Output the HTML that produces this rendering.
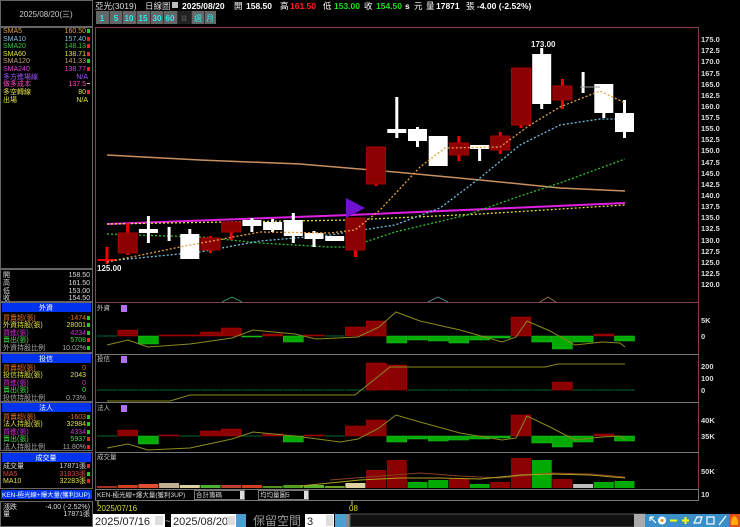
<!DOCTYPE html>
<html><head><meta charset="utf-8">
<style>
html,body{margin:0;padding:0;background:#000;width:740px;height:527px;overflow:hidden}
body{font-family:"Liberation Sans","Noto Sans CJK TC",sans-serif}
svg{position:absolute;left:0;top:0}
</style></head><body>
<svg width="740" height="527" viewBox="0 0 740 527" xmlns="http://www.w3.org/2000/svg" font-family="Liberation Sans, Noto Sans CJK TC, sans-serif">
<rect width="740" height="527" fill="#000"/>
<g fill="none" stroke="#666" stroke-width="1">
<rect x="0.5" y="0.5" width="92" height="26"/>
<rect x="0.5" y="27.5" width="92" height="241"/>
<rect x="0.5" y="269.5" width="92" height="32"/>
<rect x="0.5" y="302.5" width="92" height="50"/>
<rect x="0.5" y="353.5" width="92" height="48"/>
<rect x="0.5" y="402.5" width="92" height="48"/>
<rect x="0.5" y="452.5" width="92" height="36"/>
<rect x="0.5" y="501.5" width="92" height="25"/>
</g>
<text x="46" y="17" font-size="8" fill="#ccc" text-anchor="middle">2025/08/20(三)</text>
<g font-size="7">
<text x="3" y="33" fill="#e0a040">SMA5</text><text x="86" y="33" fill="#e0a040" text-anchor="end">160.50</text><rect x="87" y="29" width="3" height="4" fill="#2c2"/>
<text x="3" y="41" fill="#80c0e0">SMA10</text><text x="86" y="41" fill="#80c0e0" text-anchor="end">157.40</text><rect x="87" y="37" width="3" height="4" fill="#e22"/>
<text x="3" y="48" fill="#40c040">SMA20</text><text x="86" y="48" fill="#40c040" text-anchor="end">148.13</text><rect x="87" y="44" width="3" height="4" fill="#e22"/>
<text x="3" y="56" fill="#e0e040">SMA60</text><text x="86" y="56" fill="#e0e040" text-anchor="end">138.71</text><rect x="87" y="52" width="3" height="4" fill="#e22"/>
<text x="3" y="63" fill="#c0a070">SMA120</text><text x="86" y="63" fill="#c0a070" text-anchor="end">141.33</text><rect x="87" y="59" width="3" height="4" fill="#2c2"/>
<text x="3" y="71" fill="#e040e0">SMA240</text><text x="86" y="71" fill="#e040e0" text-anchor="end">138.77</text><rect x="87" y="67" width="3" height="4" fill="#e22"/>
<text x="3" y="79" fill="#a050ff">多方進場線</text><text x="88" y="79" fill="#a050ff" text-anchor="end">N/A</text>
<text x="3" y="86" fill="#ff40c0">做多成本</text><text x="86" y="86" fill="#ff40c0" text-anchor="end">137.5</text><rect x="87" y="83" width="3" height="1" fill="#ccc"/>
<text x="3" y="94" fill="#e0e040">多空轉線</text><text x="86" y="94" fill="#e0e040" text-anchor="end">80</text><rect x="87" y="90" width="3" height="4" fill="#e22"/>
<text x="3" y="102" fill="#e0e040">出場</text><text x="88" y="102" fill="#e0e040" text-anchor="end">N/A</text>
</g>
<g font-size="7" fill="#ddd">
<text x="3" y="277">開</text><text x="90" y="277" text-anchor="end">158.50</text>
<text x="3" y="285">高</text><text x="90" y="285" text-anchor="end">161.50</text>
<text x="3" y="293">低</text><text x="90" y="293" text-anchor="end">153.00</text>
<text x="3" y="300">收</text><text x="90" y="300" text-anchor="end">154.50</text>
</g>
<g fill="#0033ee"><rect x="2" y="303" width="89" height="9"/><rect x="2" y="354" width="89" height="9"/><rect x="2" y="403" width="89" height="9"/><rect x="2" y="453" width="89" height="9"/><rect x="1" y="490" width="91" height="9"/></g>
<g font-size="7" text-anchor="middle" fill="#fff"><text x="46" y="310">外資</text><text x="46" y="361">投信</text><text x="46" y="410">法人</text><text x="46" y="460">成交量</text></g>
<g font-size="7">
<text x="3" y="320" fill="#e07020">買賣超(張)</text><text x="86" y="320" fill="#e07020" text-anchor="end">-1474</text><rect x="87" y="316" width="3" height="4" fill="#2c2"/>
<text x="3" y="327" fill="#e0e040">外資持股(張)</text><text x="86" y="327" fill="#e0e040" text-anchor="end">28001</text><rect x="87" y="323" width="3" height="4" fill="#2c2"/>
<text x="3" y="335" fill="#d030d0">買進(張)</text><text x="86" y="335" fill="#d030d0" text-anchor="end">4234</text><rect x="87" y="331" width="3" height="4" fill="#2c2"/>
<text x="3" y="342" fill="#40e040">賣出(張)</text><text x="86" y="342" fill="#40e040" text-anchor="end">5708</text><rect x="87" y="338" width="3" height="4" fill="#e22"/>
<text x="3" y="350" fill="#aaa">外資持股比例</text><text x="86" y="350" fill="#aaa" text-anchor="end">10.02%</text><rect x="87" y="346" width="3" height="4" fill="#2c2"/>
<text x="3" y="370" fill="#e07020">買賣超(張)</text><text x="86" y="370" fill="#e07020" text-anchor="end">0</text>
<text x="3" y="377" fill="#e0e040">投信持股(張)</text><text x="86" y="377" fill="#e0e040" text-anchor="end">2043</text>
<text x="3" y="385" fill="#d030d0">買進(張)</text><text x="86" y="385" fill="#d030d0" text-anchor="end">0</text>
<text x="3" y="392" fill="#40e040">賣出(張)</text><text x="86" y="392" fill="#40e040" text-anchor="end">0</text>
<text x="3" y="400" fill="#aaa">投信持股比例</text><text x="86" y="400" fill="#aaa" text-anchor="end">0.73%</text>
<text x="3" y="419" fill="#e07020">買賣超(張)</text><text x="86" y="419" fill="#e07020" text-anchor="end">-1603</text><rect x="87" y="415" width="3" height="4" fill="#2c2"/>
<text x="3" y="426" fill="#e0e040">法人持股(張)</text><text x="86" y="426" fill="#e0e040" text-anchor="end">32984</text><rect x="87" y="422" width="3" height="4" fill="#2c2"/>
<text x="3" y="434" fill="#d030d0">買進(張)</text><text x="86" y="434" fill="#d030d0" text-anchor="end">4334</text><rect x="87" y="430" width="3" height="4" fill="#2c2"/>
<text x="3" y="441" fill="#40e040">賣出(張)</text><text x="86" y="441" fill="#40e040" text-anchor="end">5937</text><rect x="87" y="437" width="3" height="4" fill="#e22"/>
<text x="3" y="449" fill="#aaa">法人持股比例</text><text x="86" y="449" fill="#aaa" text-anchor="end">11.80%</text><rect x="87" y="445" width="3" height="4" fill="#e22"/>
<text x="3" y="468" fill="#ddd">成交量</text><text x="86" y="468" fill="#ddd" text-anchor="end">17871張</text><rect x="87" y="464" width="3" height="4" fill="#e22"/>
<text x="3" y="476" fill="#e04040">MA5</text><text x="86" y="476" fill="#e04040" text-anchor="end">31833張</text><rect x="87" y="472" width="3" height="4" fill="#2c2"/>
<text x="3" y="483" fill="#e0e040">MA10</text><text x="86" y="483" fill="#e0e040" text-anchor="end">32283張</text><rect x="87" y="479" width="3" height="4" fill="#e22"/>
<text x="2" y="497" fill="#fff" font-size="6" textLength="88" lengthAdjust="spacingAndGlyphs">KEN-極光線+爆大量(獲利3UP)</text>
<text x="3" y="509" fill="#ddd">漲跌</text><text x="90" y="509" fill="#ddd" text-anchor="end">-4.00 (-2.52%)</text>
<text x="3" y="516" fill="#ddd">量</text><text x="90" y="516" fill="#ddd" text-anchor="end">17871張</text>
</g>
<g font-size="8.5" font-weight="bold" fill="#fff">
<text x="95" y="9" font-weight="normal" fill="#ddd">亞光(3019)</text>
<text x="145" y="9" font-weight="normal" fill="#ddd">日線圖</text>
<rect x="172" y="2" width="6" height="6" fill="#bbb"/>
<text x="182" y="9">2025/08/20</text>
<text x="234" y="9" font-weight="normal">開</text><text x="246" y="9">158.50</text>
<text x="280" y="9" font-weight="normal">高</text><text x="290" y="9" fill="#f22">161.50</text>
<text x="323" y="9" font-weight="normal">低</text><text x="334" y="9" fill="#2d2">153.00</text>
<text x="364" y="9" font-weight="normal">收</text><text x="376" y="9" fill="#2d2">154.50</text>
<text x="405" y="9">s</text><text x="414" y="9" font-weight="normal">元</text>
<text x="426" y="9" font-weight="normal">量</text><text x="436" y="9">17871</text><text x="466" y="9" font-weight="normal">張</text>
<text x="477" y="9">-4.00 (-2.52%)</text>
</g>
<g font-size="8" font-weight="bold" fill="#2ee" text-anchor="middle">
<rect x="96" y="11" width="120" height="13" fill="#666"/>
<rect x="178" y="11" width="13" height="13" fill="#222"/>
<g stroke="#333"><line x1="109.5" y1="11" x2="109.5" y2="24"/><line x1="122.5" y1="11" x2="122.5" y2="24"/><line x1="136.5" y1="11" x2="136.5" y2="24"/><line x1="150.5" y1="11" x2="150.5" y2="24"/><line x1="163.5" y1="11" x2="163.5" y2="24"/><line x1="177.5" y1="11" x2="177.5" y2="24"/><line x1="191.5" y1="11" x2="191.5" y2="24"/><line x1="204.5" y1="11" x2="204.5" y2="24"/></g>
<text x="102" y="21">1</text><text x="116" y="21">5</text><text x="129" y="21">10</text><text x="143" y="21">15</text><text x="157" y="21">30</text><text x="170" y="21">60</text><text x="184" y="21" fill="#555" font-size="6">日</text><text x="198" y="21" font-weight="normal">週</text><text x="210" y="21" font-weight="normal">月</text>
</g>
<line x1="95" y1="27.5" x2="699" y2="27.5" stroke="#804050"/>
<line x1="95.5" y1="27" x2="95.5" y2="501" stroke="#804050"/>
<line x1="698.5" y1="27" x2="698.5" y2="501" stroke="#804050"/>
<line x1="95" y1="302.5" x2="699" y2="302.5" stroke="#804050"/>
<g stroke="#777"><line x1="95" y1="354.5" x2="699" y2="354.5"/><line x1="95" y1="402.5" x2="699" y2="402.5"/><line x1="95" y1="452.5" x2="699" y2="452.5"/></g>
<g font-size="7.5" fill="#ddd" font-weight="bold">
<text x="701" y="42">175.0</text><text x="701" y="53">172.5</text><text x="701" y="64">170.0</text><text x="701" y="76">167.5</text><text x="701" y="87">165.0</text><text x="701" y="98">162.5</text><text x="701" y="109">160.0</text><text x="701" y="120">157.5</text><text x="701" y="131">155.0</text><text x="701" y="142">152.5</text><text x="701" y="153">150.0</text><text x="701" y="165">147.5</text><text x="701" y="176">145.0</text><text x="701" y="187">142.5</text><text x="701" y="198">140.0</text><text x="701" y="209">137.5</text><text x="701" y="220">135.0</text><text x="701" y="231">132.5</text><text x="701" y="243">130.0</text><text x="701" y="254">127.5</text><text x="701" y="265">125.0</text><text x="701" y="276">122.5</text><text x="701" y="287">120.0</text>
<text x="701" y="323">5K</text><text x="701" y="339">0</text>
<text x="701" y="369">200</text><text x="701" y="381">100</text><text x="701" y="393">0</text>
<text x="701" y="423">40K</text><text x="701" y="439">35K</text>
<text x="701" y="474">50K</text><text x="701" y="497">10</text>
</g>
<g fill="none" stroke-width="0.8"><polyline points="222,302 232,297 242,302" stroke="#3a6"/><polyline points="428,302 438,297 448,302" stroke="#59a"/><polyline points="540,302 548,297 556,302" stroke="#a74"/></g>
<polyline fill="none" stroke="#c89060" stroke-width="1.5" points="107,155 200,160 300,164 395,172 480,180 560,188 625,191"/>
<polyline fill="none" stroke="#e020e0" stroke-width="2" points="107,224 350,215 625,203"/>
<polyline fill="none" stroke="#e0e030" stroke-width="1.3" stroke-dasharray="2,2" points="107,224 350,220 480,214 625,205"/>
<polyline fill="none" stroke="#30c030" stroke-width="1.3" stroke-dasharray="2,2" points="107,234 200,237 260,243 330,247 350,247 395,232 467,215 520,196 560,183 625,159"/>
<polyline fill="none" stroke="#70c0e0" stroke-width="1.3" stroke-dasharray="2,2" points="107,261 200,252 260,241 330,235 395,225 440,208 480,178 520,145 560,125 600,119 625,119"/>
<g id="candles"></g>
<polygon points="346,198 365,208 346,218" fill="#7010d0"/>
<polyline fill="none" stroke="#e8a040" stroke-width="1.3" stroke-dasharray="2,2" points="107,262 180,247 260,232 330,233 355,230 380,210 420,167 445,148 500,147 530,125 560,107 600,91 625,103"/>
<line x1="580" y1="87" x2="600" y2="87" stroke="#999"/>
<text x="531" y="47" font-size="8" fill="#eee" font-weight="bold">173.00</text>
<text x="97" y="271" font-size="8" fill="#eee" font-weight="bold">125.00</text>
<g font-size="6.5" fill="#ccc"><text x="97" y="310">外資</text><text x="97" y="361">投信</text><text x="97" y="410">法人</text><text x="97" y="459">成交量</text></g>
<g fill="#b070f0"><rect x="121" y="305" width="6" height="7"/><rect x="121" y="356" width="6" height="7"/><rect x="121" y="405" width="6" height="7"/></g>
<g id="subs"></g>
<polyline fill="none" stroke="#8a8a20" points="107,345 128,340 148,347 190,344 232,338 253,330 295,334 316,339 358,337 379,327 396,312 420,321 460,330 502,342 516,337 527,321 550,331 575,345 602,342 620,343 625,347"/>
<polyline fill="none" stroke="#8a8a20" points="107,401 170,401 190,395 355,395 390,367 402,367 545,367 558,364 625,364"/>
<polyline fill="none" stroke="#8a8a20" points="107,448 128,444 148,450 190,448 232,439 253,432 295,436 340,442 358,439 379,428 396,415 420,422 460,433 502,440 516,438 527,416 550,427 575,440 602,437 620,436 625,440"/>
<polyline fill="none" stroke="#884020" points="330,480 380,476 420,473 460,476 500,478 550,473 590,474 625,477"/>
<polyline fill="none" stroke="#b0a020" points="300,486 360,480 400,478 440,478 480,479 520,475 550,474 590,475 625,478"/>
<rect x="95.5" y="489.5" width="603" height="11" fill="#000" stroke="#777"/>
<g font-size="6.5" fill="#ddd"><text x="97" y="497">KEN-極光線+爆大量(獲利3UP)</text>
<rect x="194.5" y="490.5" width="50" height="9" fill="none" stroke="#777"/><text x="196" y="497">合計籌碼</text><rect x="240" y="491" width="4" height="8" fill="#ddd"/>
<rect x="258.5" y="490.5" width="50" height="9" fill="none" stroke="#777"/><text x="260" y="497">均均量圖5</text><rect x="304" y="491" width="4" height="8" fill="#ddd"/></g>
<line x1="98" y1="501" x2="98" y2="505" stroke="#cc4"/><line x1="352" y1="501" x2="352" y2="505" stroke="#cc4"/>
<text x="97" y="511" font-size="8" fill="#dd3">2025/07/16</text>
<text x="349" y="511" font-size="8" fill="#dd3">08</text>
<rect x="93" y="514" width="72" height="13" fill="#fff"/><text x="95" y="525" font-size="11" fill="#222">2025/07/16</text><rect x="155" y="516" width="8" height="9" fill="#ddd"/>
<text x="165" y="524" font-size="9" fill="#ddd">~</text>
<rect x="171" y="514" width="65" height="13" fill="#fff"/><text x="173" y="525" font-size="11" fill="#222">2025/08/20</text><rect x="227" y="516" width="8" height="9" fill="#ddd"/>
<rect x="236" y="514" width="10" height="13" fill="#4a9fd0"/>
<text x="253" y="525" font-size="12" fill="#999">保留空間</text>
<rect x="305" y="514" width="29" height="13" fill="#fff"/><text x="307" y="525" font-size="11" fill="#222">3</text><rect x="326" y="515" width="7" height="11" fill="#ddd"/>
<rect x="335" y="514" width="11" height="13" fill="#4a9fd0"/>
<rect x="346" y="514" width="4" height="13" fill="#888"/>
<rect x="350" y="514" width="295" height="13" fill="#111" stroke="#555"/>
<rect x="634" y="514" width="11" height="13" fill="#aaa"/>
<rect x="645" y="514" width="95" height="13" fill="#3a8fc8"/>
<g stroke="#fff" stroke-width="1.2" fill="none">
<path d="M650 517 L656 523 M650 517 L650 521 M650 517 L654 517"/>
<circle cx="662" cy="520.5" r="4" fill="#fff" stroke="none"/><circle cx="662" cy="520.5" r="1.5" fill="#e80" stroke="none"/>
<path d="M670 520.5 H677" stroke="#ff0" stroke-width="2"/>
<path d="M682 520.5 H689 M685.5 517 V524" stroke="#ff0" stroke-width="2"/>
<path d="M694 523 L697 517 H702 L700 523 Z"/>
<rect x="707" y="517" width="7" height="7"/>
<path d="M719 525 L726 516"/>
</g>
<rect x="729" y="514" width="11" height="13" fill="#e05020"/><path d="M731 525 Q731 517 734.5 516 Q738 517 738 525 Z" fill="#ffb000"/>
</svg>
<script>
var ns="http://www.w3.org/2000/svg";
function X(i){return 107+20.7*i;}
function el(p,t,a){var e=document.createElementNS(ns,t);for(var k in a)e.setAttribute(k,a[k]);p.appendChild(e);return e;}
var g=document.getElementById('candles');
var c=[[0,'r',259,261,247,264],[1,'d',233,253,223,255],[2,'w',229,233,216,243],[3,'t',233,235,227,241],[4,'w',234,259,229,259],[5,'d',238,250,236,253],[6,'d',222,232,222,240],[7,'w',220,226,218,232],[8,'w',222,230,219,232],[9,'w',220,236,213,243],[10,'w',233,239,231,247],[11,'w',236,241,236,241],[12,'d',218,250,218,257],[13,'d',147,184,147,186],[14,'w',129,133,97,138],[15,'w',129,141,127,147],[16,'w',136,166,136,166],[17,'d',143,155,136,161],[18,'w',145,149,145,161],[19,'d',136,150,132,154],[20,'d',68,125,68,128],[21,'w',54,104,48,109],[22,'d',86,100,79,109],[23,'t',72,93,72,93],[24,'w',84,113,84,118],[25,'w',113,132,100,138]];
c.forEach(function(d){var x=X(d[0]);var col=d[1]=='w'||d[1]=='t'?'#fff':(d[1]=='r'?'#e00':'#8b0000');var wc=d[1]=='w'||d[1]=='t'?'#fff':'#e00';
el(g,'line',{x1:x,x2:x,y1:d[4],y2:d[5],stroke:wc,'stroke-width':3});
if(d[1]=='t')return;
el(g,'rect',{x:x-9.5,y:d[2],width:19,height:Math.max(2,d[3]-d[2]),fill:col,stroke:d[1]=='d'?'#a00':'none'});});
var s=document.getElementById('subs');
function hist(z,vals,gr){vals.forEach(function(v,i){if(v===null)return;var x=X(i);var h=Math.abs(v);var col=v>0?'#8b0000':(v<0?'#0a0':(gr||'#063'));
if(v==0){el(s,'rect',{x:x-10,y:z-0.5,width:20,height:1,fill:col});return;}
el(s,'rect',{x:x-10,y:v>0?z-h:z,width:20,height:h,fill:col,stroke:v>0?'#b00':'#2c2','stroke-width':0.5});});}
hist(336,[0,6,-8,1,1,4,8,-1,2,-6,1,0,9,15,-7,-4,-5,-7,-4,-2,19,-6,-13,-6,2,-5]);
hist(390,[0,0,0,0,0,0,0,0,0,0,0,0,0,27,25,0,0,0,0,0,0,0,8,0,0,0]);
hist(436,[0,6,-8,1,0,5,7,0,2,-6,1,0,10,16,-6,-3,-5,-4,-3,-2,21,-7,-11,-6,2,-5]);
var vol=[2,3,4,5,3,3,3,3,2,3,3,2,5,18,28,6,8,9,4,6,30,28,9,4,6,7];
var vc=['#a03020','#d04020','#e05030','#c0b090','#e0d0a0','#50b030','#c04030','#d04020','#509020','#50a020','#60b030','#70a020','#e0d0a0','#8b0000','#8b0000','#0a0','#0a0','#8b0000','#0a0','#8b0000','#8b0000','#0a0','#8b0000','#bbb','#0a0','#0a0'];
vol.forEach(function(v,i){el(s,'rect',{x:X(i)-10,y:488-v,width:20,height:v,fill:vc[i]});});
</script>
</body></html>
